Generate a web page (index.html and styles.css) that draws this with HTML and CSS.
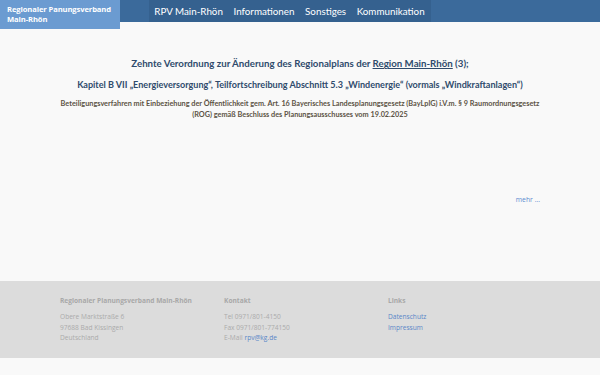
FILE: index.html
```html
<!DOCTYPE html>
<html lang="de">
<head>
    <meta charset="UTF-8">
    <meta name="viewport" content="width=device-width, initial-scale=1.0">
    <title>Regionaler Planungsverband Main-Rhön</title>
    <link rel="stylesheet" href="styles.css">
</head>
<body>
    <header class="topbar">
        <a href="#" class="brand">Regionaler Panungsverband<br>Main-Rhön</a>
        <nav class="mainnav">
            <a href="#">RPV Main-Rhön</a>
            <a href="#">Informationen</a>
            <a href="#">Sonstiges</a>
            <a href="#">Kommunikation</a>
        </nav>
    </header>

    <main class="content">
        <h1 class="title">Zehnte Verordnung zur Änderung des Regionalplans der <a href="#">Region Main-Rhön</a> (3);</h1>
        <h2 class="subtitle">Kapitel B VII „Energieversorgung“, Teilfortschreibung Abschnitt 5.3 „Windenergie“ (vormals „Windkraftanlagen“)</h2>
        <p class="lead">Beteiligungsverfahren mit Einbeziehung der Öffentlichkeit gem. Art. 16 Bayerisches Landesplanungsgesetz (BayLplG) i.V.m. § 9 Raumordnungsgesetz (ROG) gemäß Beschluss des Planungsausschusses vom 19.02.2025</p>
        <div class="more"><a href="#">mehr ...</a></div>
    </main>

    <footer class="footer">
        <div class="footer-inner">
            <div class="footer-col">
                <h3>Regionaler Planungsverband Main-Rhön</h3>
                <p>Obere Marktstraße 6<br>97688 Bad Kissingen<br>Deutschland</p>
            </div>
            <div class="footer-col">
                <h3>Kontakt</h3>
                <p>Tel 0971/801-4150<br>Fax 0971/801-774150<br>E-Mail <a href="#">rpv@kg.de</a></p>
            </div>
            <div class="footer-col">
                <h3>Links</h3>
                <p><a href="#">Datenschutz</a><br><a href="#">Impressum</a></p>
            </div>
        </div>
    </footer>
</body>
</html>
```

FILE: styles.css
```css
body {
    margin: 0;
    padding: 0;
    background-color: #f9f9f9;
    font-family: "Open Sans", "DejaVu Sans", sans-serif;
    color: #555;
}

a {
    text-decoration: none;
}

.topbar {
    display: flex;
    align-items: flex-start;
    height: 22px;
    background-color: #3b6a9b;
}

.brand {
    box-sizing: border-box;
    width: 120px;
    height: 29px;
    padding: 4px 0 0 7px;
    background-color: #6b9bd1;
    color: #fff;
    font-size: 7.6px;
    font-weight: bold;
    line-height: 10px;
    letter-spacing: -0.1px;
}

.mainnav {
    display: flex;
    margin-left: 29px;
    padding: 0 1px 0 0;
    background-color: #35618f;
    font-family: Lato, "Open Sans", sans-serif;
}

.mainnav a {
    padding: 0 5.3px;
    color: #fff;
    font-size: 9.8px;
    line-height: 22px;
}

.content {
    width: 480px;
    height: 259px;
    margin: 0 auto;
    padding-top: 34px;
    box-sizing: border-box;
    text-align: center;
    font-family: Lato, "Open Sans", sans-serif;
}

.title {
    margin: 0 0 9px;
    color: #2f4b6c;
    font-size: 9.7px;
    line-height: 14px;
}

.title a {
    color: #2f4b6c;
    text-decoration: underline;
}

.subtitle {
    margin: 0 0 8px;
    color: #2f4b6c;
    font-size: 9.05px;
    line-height: 11px;
}

.lead {
    margin: 0 -5px;
    color: #5c5345;
    font-size: 7.3px;
    font-weight: bold;
    line-height: 11px;
}

.more {
    margin-top: 75px;
    text-align: right;
    font-family: "Open Sans", sans-serif;
    font-size: 6.8px;
}

.more a {
    color: #5b8bd0;
}

.footer {
    height: 77px;
    background-color: #dcdcdc;
}

.footer-inner {
    display: grid;
    grid-template-columns: 164px 164px 152px;
    width: 480px;
    margin: 0 auto;
    padding-top: 15px;
}

.footer-col h3 {
    margin: 0 0 6px;
    color: #a8a8a8;
    font-size: 6.6px;
    line-height: 10px;
}

.footer-col p {
    margin: 0;
    color: #ababab;
    font-size: 6.6px;
    line-height: 10.5px;
}

.footer-col a {
    color: #5a87c8;
}
```
